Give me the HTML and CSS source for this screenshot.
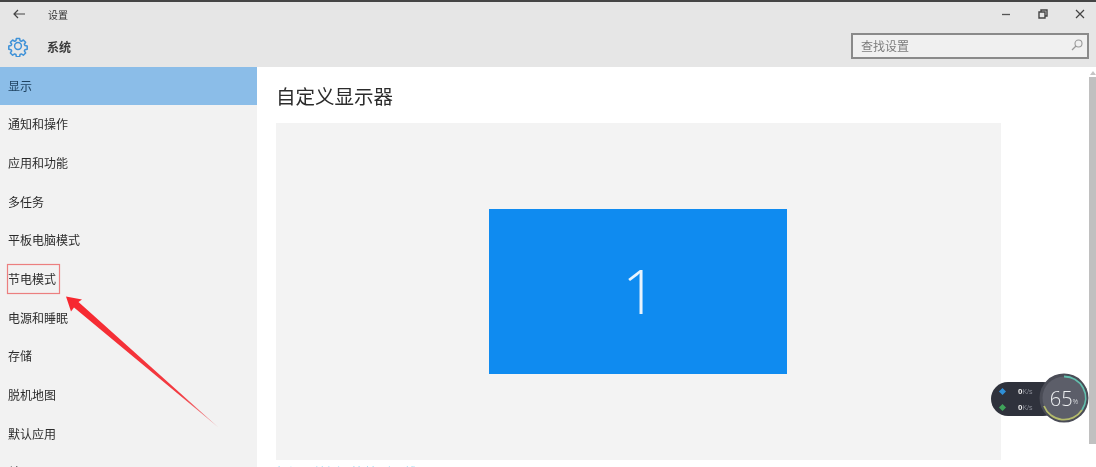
FILE: index.html
```html
<!DOCTYPE html>
<html lang="zh-CN">
<head>
<meta charset="utf-8">
<title>设置</title>
<link rel="stylesheet" href="styles.css">
</head>
<body>
<div class="window">
  <div class="edge"></div>
  <header class="header">
    <div class="titlebar">
      <div class="title-left">
        <svg class="back" width="12" height="10" viewBox="0 0 12 10"><path d="M12 5H1M5 1 1 5l4 4" fill="none" stroke="#444" stroke-width="1.2"/></svg>
        <span class="app-name">设置</span>
      </div>
      <div class="controls">
        <svg width="10" height="10" viewBox="0 0 10 10"><path d="M1 5.5h8" stroke="#555" stroke-width="1.3"/></svg>
        <svg width="10" height="10" viewBox="0 0 10 10"><path d="M1 3h6v6H1zM3 3V1h6v6H7" fill="none" stroke="#444" stroke-width="1.4"/></svg>
        <svg width="10" height="10" viewBox="0 0 10 10"><path d="M1 1l8 8M9 1 1 9" stroke="#444" stroke-width="1.2"/></svg>
      </div>
    </div>
    <div class="subbar">
      <div class="section">
        <svg class="gear" width="22" height="22" viewBox="0 0 22 22"><path d="M9 1.5h4l.6 2.9 1.6.7 2.500-1.600 2.800 2.800-1.600 2.500.7 1.600 2.900.600v4l-2.900.600-.7 1.600 1.600 2.500-2.800 2.800-2.500-1.600-1.600.7-.6 2.900H9l-.6-2.900-1.600-.7-2.500 1.600-2.800-2.800 1.600-2.500-.7-1.600-2.900-.6v-4l2.900-.6.700-1.600-1.600-2.500 2.800-2.800 2.500 1.600 1.600-.7z" transform="translate(2.200 2.200) scale(.8)" fill="none" stroke="#3f92d8" stroke-width="1.900" stroke-linejoin="round"/><circle cx="11" cy="11" r="3.400" fill="none" stroke="#3f92d8" stroke-width="1.500"/></svg>
        <span class="section-name">系统</span>
      </div>
      <div class="search">
        <span>查找设置</span>
        <svg width="12" height="12" viewBox="0 0 12 12"><circle cx="7.500" cy="4.500" r="3.500" fill="none" stroke="#999" stroke-width="1.100"/><path d="M5 7 1 11" stroke="#999" stroke-width="1.300"/></svg>
      </div>
    </div>
  </header>
  <div class="body">
    <nav class="sidebar">
      <div class="item active">显示</div>
      <div class="item">通知和操作</div>
      <div class="item">应用和功能</div>
      <div class="item">多任务</div>
      <div class="item">平板电脑模式</div>
      <div class="item">节电模式</div>
      <div class="item">电源和睡眠</div>
      <div class="item">存储</div>
      <div class="item">脱机地图</div>
      <div class="item">默认应用</div>
      <div class="item">关于</div>
    </nav>
    <main class="main">
      <div class="content">
        <h1 class="heading">自定义显示器</h1>
        <div class="preview"><div class="monitor">1</div></div>
        <div class="links"><span>标识</span><span>检测</span><span>连接到无线显示器</span></div>
      </div>
      <div class="scrollbar"><div class="scroll-arrow"></div><div class="thumb"></div></div>
    </main>
  </div>
</div>

<svg class="annotation" width="1096" height="467" viewBox="0 0 1096 467">
  <defs>
    <linearGradient id="fade" gradientUnits="userSpaceOnUse" x1="66" y1="297" x2="218" y2="428">
      <stop offset="0" stop-color="#f7272f"/>
      <stop offset=".75" stop-color="#f23c42"/>
      <stop offset="1" stop-color="#eda0a4"/>
    </linearGradient>
  </defs>
  <rect x="7.500" y="264.500" width="52" height="29" fill="none" stroke="#ec7f7f" stroke-width="1.200"/>
  <path d="M66 296.500 82 299.500 78.500 302 218.500 427.500 74 307.500 71 311.500z" fill="url(#fade)"/>
</svg>

<div class="meter">
  <div class="rates">
    <div class="rate"><i class="dot up"></i><span class="num">0</span><span class="unit">K/s</span></div>
    <div class="rate"><i class="dot down"></i><span class="num">0</span><span class="unit">K/s</span></div>
  </div>
  <div class="gauge">
    <svg width="50" height="50" viewBox="0 0 50 50">
      <circle cx="25" cy="25" r="24.500" fill="#4a4c56"/>
      <circle cx="25" cy="25" r="21.500" fill="#5c5e69"/>
      <path d="M25 3.500A21.500 21.500 0 0 1 43 37" fill="none" stroke="#63bfae" stroke-width="1.800"/>
      <path d="M43 37A21.500 21.500 0 0 1 5 33" fill="none" stroke="#b4bb6c" stroke-width="1.800"/>
    </svg>
    <span class="pct">65<small>%</small></span>
  </div>
</div>
</body>
</html>
```
FILE: styles.css
```css
* { box-sizing: border-box; }
html, body { margin: 0; height: 100%; overflow: hidden; background: #fff; }
body {
  position: relative;
  font-family: "Noto Sans CJK SC", "Noto Sans", sans-serif;
  color: #333;
  font-size: 12px;
}
.window { display: flex; flex-direction: column; height: 467px; overflow: hidden; filter: blur(.55px); }
.edge { height: 2px; background: #454545; flex: none; }
.header { background: #e6e6e6; flex: none; height: 64.6px; display: flex; flex-direction: column; }
.titlebar { height: 26px; display: flex; justify-content: space-between; align-items: center; padding: 0 11px 2px 13px; }
.title-left { display: flex; align-items: center; }
.back { margin-right: 23px; }
.app-name { font-size: 10px; color: #333; }
.controls { display: flex; gap: 27px; }
.subbar { flex: 1; display: flex; justify-content: space-between; align-items: center; padding: 0 7px 2px 7px; }
.section { display: flex; align-items: center; }
.gear { margin-right: 18px; }
.section-name { font-size: 12px; font-weight: 700; color: #3a3a3a; }
.search {
  width: 238px; height: 26px;
  border: 2px solid #8a8a8a; background: #f0f0f0; color: #7c7c7c;
  display: flex; justify-content: space-between; align-items: center;
  padding: 0 4px 2px 8px;
}
.body { flex: 1; display: flex; min-height: 0; }
.sidebar { width: 257px; flex: none; background: #f2f2f2; }
.item { height: 38.7px; line-height: 38.7px; padding-left: 8px; color: #2c2c2c; white-space: nowrap; }
.item.active { background: #8bbde8; color: #1f4260; }
.main { flex: 1; display: flex; min-width: 0; background: #fff; }
.content { flex: 1; padding-left: 19px; min-width: 0; }
.heading { margin: 0; height: 56.400px; padding-top: 15px; font-size: 19.500px; line-height: 28px; font-weight: 400; color: #2c2c2c; }
.preview {
  width: 725px; height: 337px; background: #f3f3f3; padding-right: 1px;
  display: flex; align-items: center; justify-content: center;
}
.monitor {
  width: 298px; height: 165px; background: #0f8bf0; color: #e8f3fd; padding-left: 3px;
  display: flex; align-items: center; justify-content: center;
  font-family: "Open Sans", sans-serif; font-weight: 300; font-size: 60px;
}
.links { display: flex; gap: 12px; padding-top: 2px; font-size: 13px; line-height: 20px; color: #a5e0f5; }
.scrollbar { width: 7px; flex: none; padding-top: 4px; }
.scroll-arrow { width: 0; height: 0; margin: 0 auto 2px; border: 3px solid transparent; border-top: 0; border-bottom: 4px solid #c4c4c4; }
.thumb { height: 367px; background: #c0c0c0; }
.annotation { position: absolute; left: 0; top: 0; pointer-events: none; filter: blur(.4px); }
.meter {
  position: absolute; left: 991px; top: 382px; width: 69px; height: 34px;
  border-radius: 17px; background: #2f323c; filter: blur(.5px);
}
.rates { display: flex; flex-direction: column; padding: 1px 0 0 9px; }
.rate { height: 16px; display: flex; align-items: center; }
.dot { width: 5px; height: 5px; transform: rotate(45deg); margin-right: 13px; }
.dot.up { background: #2f8fd6; }
.dot.down { background: #3fa35a; }
.num { font-family: "Liberation Sans", sans-serif; font-size: 8px; font-weight: 700; color: #eee; }
.unit { font-family: "Liberation Sans", sans-serif; font-size: 7px; color: #8b8e98; }
.gauge { position: absolute; left: 48px; top: -9px; width: 50px; height: 50px; }
.gauge svg { display: block; }
.pct {
  position: absolute; inset: 0; display: flex; align-items: center; justify-content: center;
  font-family: "Open Sans", sans-serif; font-weight: 300; font-size: 20px; color: #eef0f2;
}
.pct small { font-size: 7px; margin-top: 7px; }
```
